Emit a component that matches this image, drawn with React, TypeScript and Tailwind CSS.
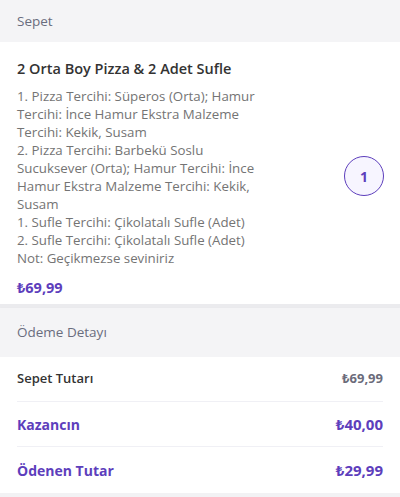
import React from "react";

const lines = [
  "1. Pizza Tercihi: Süperos (Orta); Hamur",
  "Tercihi: İnce Hamur Ekstra Malzeme",
  "Tercihi: Kekik, Susam",
  "2. Pizza Tercihi: Barbekü Soslu",
  "Sucuksever (Orta); Hamur Tercihi: İnce",
  "Hamur Ekstra Malzeme Tercihi: Kekik,",
  "Susam",
  "1. Sufle Tercihi: Çikolatalı Sufle (Adet)",
  "2. Sufle Tercihi: Çikolatalı Sufle (Adet)",
  "Not: Geçikmezse seviniriz",
];

export default function App() {
  return (
    <div
      className="w-[400px] h-[497px] bg-[#f2f2f4] overflow-hidden"
      style={{ fontFamily: '"Open Sans", "Noto Sans", sans-serif' }}
    >
      <div className="h-[42px] flex items-center px-[17px] bg-[#f4f4f6] shadow-[0_1px_2px_rgba(0,0,0,0.06)]">
        <span className="text-[13.5px] font-medium text-[#6a6d7e]">Sepet</span>
      </div>
      <div className="bg-white flex items-center pl-[17px] pr-[16px] pt-[16px] pb-[10px] h-[262px]">
        <div className="flex-1 flex flex-col self-start">
          <div className="text-[14.5px] font-semibold text-[#333333] leading-[22px]">
            2 Orta Boy Pizza &amp; 2 Adet Sufle
          </div>
          <div className="mt-[7px] text-[13.3px] leading-[18px] text-[#747474]">
            {lines.map((l) => (
              <div key={l}>{l}</div>
            ))}
          </div>
          <div className="mt-[11px] text-[14.5px] font-bold text-[#5d3ebc] leading-[20px]">
            ₺69,99
          </div>
        </div>
        <div className="w-[40px] h-[40px] rounded-full border-[1.5px] border-[#5d3ebc] bg-[#f7f5ff] flex items-center justify-center text-[14px] font-bold text-[#5d3ebc]">
          1
        </div>
      </div>
      <div className="h-[4px] bg-[#ebebee]" />
      <div className="h-[49px] flex items-center px-[17px] bg-[#f4f4f6] shadow-[0_1px_2px_rgba(0,0,0,0.06)]">
        <span className="text-[13.5px] font-medium text-[#6a6d7e]">Ödeme Detayı</span>
      </div>
      <div className="bg-white px-[17px] h-[136px] flex flex-col">
        <div className="h-[45px] flex items-center justify-between border-b border-[#f0f0f5]">
          <span className="text-[13px] font-semibold text-[#333333]">Sepet Tutarı</span>
          <span className="text-[13px] font-bold text-[#6b6b7a]">₺69,99</span>
        </div>
        <div className="h-[45px] flex items-center justify-between border-b border-[#f0f0f5]">
          <span className="text-[14px] font-bold text-[#5d3ebc]">Kazancın</span>
          <span className="text-[15px] font-bold text-[#5d3ebc]">₺40,00</span>
        </div>
        <div className="h-[46px] flex items-center justify-between">
          <span className="text-[14px] font-bold text-[#5d3ebc]">Ödenen Tutar</span>
          <span className="text-[15px] font-bold text-[#5d3ebc]">₺29,99</span>
        </div>
      </div>
    </div>
  );
}
